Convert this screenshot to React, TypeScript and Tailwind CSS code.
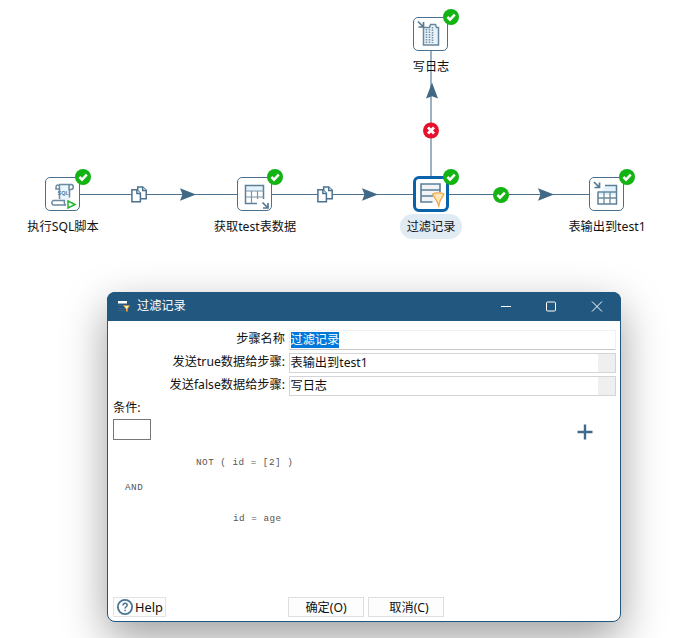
import type { ReactNode } from "react";

const BLUE = "#4a718f";

function Check({ className }: { className: string }) {
  return (
    <svg className={`absolute size-4 ${className}`} viewBox="0 0 16 16">
      <circle cx="8" cy="8" r="8" fill="#12b312" />
      <path d="M4.4 8 7 10.6 11.8 5.6" fill="none" stroke="#fff" strokeWidth="2.5" />
    </svg>
  );
}

type StepProps = {
  place: string;
  label: string;
  selected?: boolean;
  children: ReactNode;
};

function Step({ place, label, selected, children }: StepProps) {
  return (
    <div className={`absolute flex w-[120px] flex-col items-center ${place}`}>
      <div className="relative mr-px h-[34px] w-[35px]">
        <div
          className={
            selected
              ? "absolute -top-px left-0 size-[36px] rounded-[6px] border-[3px] border-[#0a62a9] bg-white"
              : "absolute inset-0 rounded-[5px] border border-[#4a718f] bg-white"
          }
        />
        <svg className="absolute inset-0 size-[35px]" viewBox="0 0 35 35" fill="none">
          {children}
        </svg>
        <Check className="-top-2 left-[30px]" />
      </div>
      <div
        className={`mt-[3px] flex h-[25px] items-center whitespace-nowrap rounded-full px-[7px] ${
          selected ? "bg-[#e1ebf4]" : ""
        }`}
      >
        {label}
      </div>
    </div>
  );
}

function Copies({ x }: { x: number }) {
  return (
    <g transform={`translate(${x} 186)`} stroke={BLUE} strokeWidth="1.5" fill="#fff">
      <path d="M6.700 1h5l3.500 3.300v8.400H6.700z" />
      <path d="M11.700 1v3.500h3.500" />
      <path d="M.9 3.700h5l3.500 3.500v8.600H.9z" />
      <path d="M5.900 3.700v3.700h3.500" />
    </g>
  );
}

function Hops() {
  return (
    <svg className="absolute inset-0 h-[292px] w-[676px]" viewBox="0 0 676 292">
      <path d="M79 194.5H590" stroke={BLUE} />
      <path d="M431 50V178" stroke="#9cb1c1" strokeWidth="2" />
      <g fill="#416885">
        <path d="M180 188.3 196 194.5 180 200.7 182.5 194.5z" />
        <path d="M362 188.3 378 194.5 362 200.7 364.5 194.5z" />
        <path d="M538 188.3 554 194.5 538 200.7 540.5 194.5z" />
        <path d="M432 82.5 426 98.5 432 96.3 438 98.5z" />
      </g>
      <Copies x={131} />
      <Copies x={317} />
      <circle cx="431" cy="130.5" r="8" fill="#e8112d" />
      <path d="m428 127.500 6 6m0-6-6 6" stroke="#fff" strokeWidth="2.8" />
    </svg>
  );
}

function Field({ label, value, kind }: { label: string; value: string; kind: "text" | "combo" }) {
  return (
    <div className="flex h-5 items-center">
      <div className="mb-[2px] w-[177px] whitespace-nowrap text-right">{label}</div>
      {kind === "text" ? (
        <div className="ml-1 flex h-5 w-[327px] items-center border border-[#f0f0f0] border-b-[#c6c6c6] pl-[0.5px]">
          <span className="h-4 bg-[#0078d7] leading-4 text-white">{value}</span>
        </div>
      ) : (
        <div className="ml-1 flex h-5 w-[327px] items-center justify-between border border-[#d4d4d8] pl-[0.5px]">
          <span>{value}</span>
          <span className="h-full w-[17px] bg-[#efefef]" />
        </div>
      )}
    </div>
  );
}

function Dialog() {
  return (
    <div className="relative ml-[107px] flex h-[330px] w-[514px] flex-col rounded-lg border border-[#22577f] bg-white shadow-[0_16px_44px_rgba(0,0,0,0.38)]">
      <div className="-mx-px -mt-px flex h-[29px] shrink-0 items-center rounded-t-lg bg-[#22577f] text-white">
        <svg className="ml-[10px] size-[14px]" viewBox="0 0 14 14">
          <path d="M1 1h9v2.500H1z" fill="#fff" />
          <path d="M1 5.500h7M1 8.500h7M1 10.500h7" stroke="#356687" />
          <path d="M6 5.300h7L10.700 9v2.500H9V9z" fill="#efa53b" />
          <path d="M7.500 6h4L9.700 9z" fill="#fff0cf" />
        </svg>
        <span className="mb-[2px] ml-[6px]">过滤记录</span>
        <svg className="ml-auto mr-[18px] h-[11px] w-[102px]" viewBox="0 0 102 11" fill="none" stroke="#fff">
          <path d="M0 5.500h10" />
          <rect x="45.500" y="1" width="9" height="9" rx="1" />
          <path d="m91 .5 10 10m0-10-10 10" />
        </svg>
      </div>
      <div className="mt-[9px] flex flex-col gap-[3px]">
        <Field label="步骤名称" value="过滤记录" kind="text" />
        <Field label="发送true数据给步骤:" value="表输出到test1" kind="combo" />
        <Field label="发送false数据给步骤:" value="写日志" kind="combo" />
      </div>
      <div className="ml-[5px] mt-[2px] h-5 leading-5">条件:</div>
      <div className="ml-[5px] mt-px flex h-[22px] items-start justify-between">
        <div className="h-[21px] w-[38px] border border-[#777]" />
        <svg className="mr-[27px] mt-[5px] size-4" viewBox="0 0 16 16">
          <path d="M8 .5v15M.5 8h15" stroke="#416b89" strokeWidth="2.4" />
        </svg>
      </div>
      <div className="whitespace-pre font-['Liberation_Mono',monospace] text-[9.3px] leading-3 tracking-[0.5px] text-[#555]">
        <div className="ml-[88px] mt-4">NOT ( id = [2] )</div>
        <div className="ml-[17px] mt-[13px]">AND</div>
        <div className="ml-[125px] mt-[19px]">id = age</div>
      </div>
      <div className="mb-[4px] ml-[5px] mt-auto flex h-[20px]">
        <div className="flex w-[53px] items-center border border-[#e3e3e3] bg-[#fdfdfd] pl-[3px] text-[12.8px]">
          <svg className="mr-[2px] size-4 shrink-0" viewBox="0 0 16 16" fill="none" stroke="#4a7694">
            <circle cx="8" cy="8" r="7.1" strokeWidth="1.8" />
            <path d="M5.900 6.400c0-2.900 4.300-2.600 4.300-.2 0 1.500-2.100 1.600-2.100 3.200M8.100 10.800v1.400" strokeWidth="1.5" />
          </svg>
          Help
        </div>
        <div className="ml-[122px] flex w-[76px] items-center justify-center border border-[#dedede] bg-[#fdfdfd] pt-px">
          确定(O)
        </div>
        <div className="ml-1 flex w-[76px] items-center justify-center border border-[#dedede] bg-[#fdfdfd] pl-[6px] pt-px">
          取消(C)
        </div>
      </div>
    </div>
  );
}

export default function App() {
  return (
    <div className="h-[638px] w-[676px] overflow-hidden bg-white font-['Noto_Sans','Noto_Sans_CJK_SC',sans-serif] text-[12.2px] leading-4 text-[#111]">
      <div className="relative h-[292px]">
        <Hops />
        <Check className="left-[493px] top-[187px]" />
        <Step place="left-[3px] top-[177px]" label="执行SQL脚本">
          <path d="M14 8h11v16H14z" fill="#eaf5fc" />
          <path
            d="M14.500 22V10c0-3-3.500-2.500-3.500 0v2h3M14 7.500h12c3 0 3 5 0 5h-2v-3c0-1 1-2 2-2M24.500 12v8.500M20 23.500H8c-1.500 1-1.500 3.500 0 4.500h13M20 23.500c-1.500 1.500-.5 4 1 4.500"
            stroke="#6a8aa1"
            strokeWidth="1.5"
          />
          <text x="12.500" y="18" fontSize="5.500" fontWeight="700" fill="#577d99" fontFamily="Liberation Sans">
            SQL
          </text>
          <path d="M23 24v7l7-3.500z" fill="#fff" stroke="#20b52c" strokeWidth="1.5" />
        </Step>
        <Step place="left-[195px] top-[177px]" label="获取test表数据">
          <path d="M8.500 8.500h18v5h-18z" fill="#e2f3fc" />
          <path d="M20 26.500H8.500v-18h18V22" stroke="#5c7f99" strokeWidth="1.5" />
          <path d="M8.500 14h18M8.500 20h18M14.500 14v12.500M20.500 14v8" stroke="#7894a9" strokeWidth="1.200" />
          <path d="m25.500 25.500 5.500 5.500m0-5v5h-5" stroke="#55798f" strokeWidth="1.700" />
        </Step>
        <Step place="left-[371px] top-[177px]" label="过滤记录" selected>
          <path d="M8 7h18.500v18H8z" fill="#f0f4f7" />
          <path d="M19.500 25H8V7h19v8.500M8 13h19M8 19h12" stroke="#5e7f98" strokeWidth="1.600" />
          <path
            d="M19.500 17.200c2.500-1.800 9-1.800 11.500 0L27 24l-1.200 5-2-5z"
            fill="#ffe5b8"
            stroke="#f3aa4b"
            strokeWidth="1.300"
          />
        </Step>
        <Step place="left-[547px] top-[177px]" label="表输出到test1">
          <path d="M9 14h18.500v4H9zM16 9h11.500v5H13z" fill="#e2f3fc" />
          <path d="M16 8.500h11.500V27H9V14.500" stroke="#5c7f99" strokeWidth="1.500" />
          <path d="M9 15h18.500M9 21h18.500M15 15v12M21 15v12" stroke="#6a899f" strokeWidth="1.300" />
          <path d="m5 5 5.500 5.500m0-5v5h-5" stroke="#55798f" strokeWidth="1.700" />
        </Step>
        <Step place="left-[371px] top-[17px]" label="写日志">
          <path d="M10.500 10.500h6l1-3h5l1 3h2V28h-15z" fill="#e8f3f9" stroke="#6787a0" strokeWidth="1.500" />
          <path
            d="M13.500 12v14M16.500 12v14M19.500 10v16"
            stroke="#7893a8"
            strokeWidth="1.600"
            strokeDasharray="1.500 1"
          />
          <path d="m5 4.500 5.500 5.500m0-5v5h-5" stroke="#55798f" strokeWidth="1.700" />
        </Step>
      </div>
      <Dialog />
    </div>
  );
}
